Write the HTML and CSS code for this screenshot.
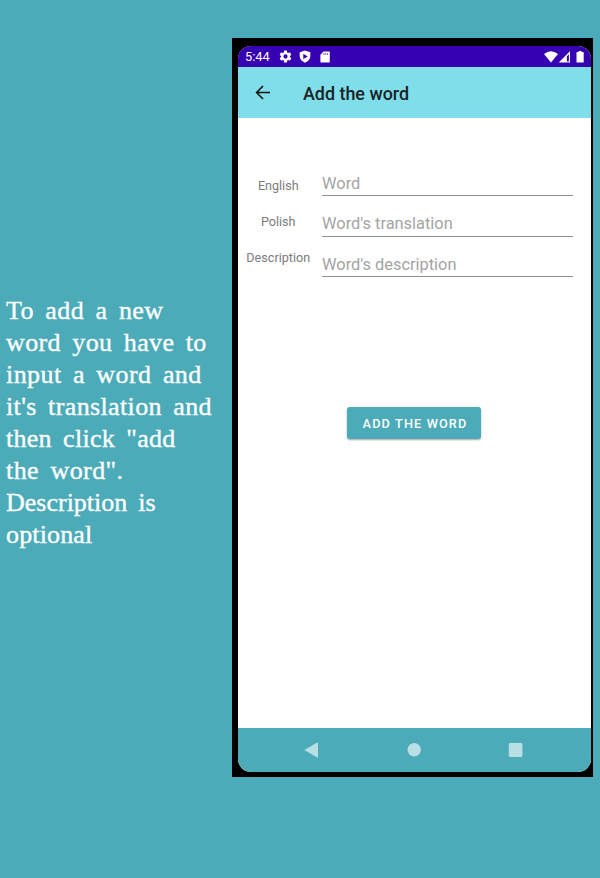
FILE: index.html
```html
<!DOCTYPE html>
<html lang="en">
<head>
<meta charset="utf-8">
<title>Add the word</title>
<link rel="stylesheet" href="styles.css">
</head>
<body>
<main class="page">
  <p class="intro">
    <span class="l1">To add a new</span>
    <span class="l2">word you have to</span>
    <span class="l3">input a word and</span>
    <span class="l4">it's translation and</span>
    <span class="l5">then click "add</span>
    <span class="l6">the word".</span>
    <span class="l7">Description is</span>
    <span class="l8">optional</span>
  </p>
  <section class="phone">
    <div class="screen">
      <div class="status">
        <span class="time">5:44</span>
        <svg class="gear" width="13" height="13" viewBox="1 1 22 22"><path fill="#fff" fill-rule="evenodd" d="M19.4 13a7.500 7.500 0 0 0 0-2l2.100-1.650a.5.5 0 0 0 .12-.64l-2-3.460a.5.5 0 0 0-.61-.22l-2.490 1a7.300 7.300 0 0 0-1.690-.98L14.450 2.400A.5.5 0 0 0 14 2h-4a.5.5 0 0 0-.5.400L9.120 5.050c-.61.25-1.170.59-1.690.98l-2.490-1a.5.5 0 0 0-.61.220l-2 3.460a.5.5 0 0 0 .12.640L4.560 11a7.900 7.900 0 0 0 0 2l-2.110 1.650a.5.5 0 0 0-.12.640l2 3.460c.12.220.39.300.61.220l2.490-1c.52.400 1.080.73 1.690.98l.38 2.650c.03.240.24.400.5.400h4c.25 0 .46-.18.500-.400l.38-2.650c.61-.25 1.170-.59 1.690-.98l2.490 1c.23.090.49 0 .61-.22l2-3.460a.5.5 0 0 0-.12-.640zM12 8.400a3.600 3.600 0 1 1 0 7.200 3.600 3.600 0 0 1 0-7.200z"/></svg>
        <svg class="shield" width="12" height="13" viewBox="0 0 12 13"><path fill="#fff" fill-rule="evenodd" d="M6 .5 11.300 2.300V6.500Q10.800 10.800 6 12.700 1.200 10.800.7 6.500V2.300zM4.300 3.700v5.400L8.800 6.400z"/></svg>
        <svg class="card" width="10" height="12" viewBox="0 0 10 12"><path fill="#fff" fill-rule="evenodd" d="M3.500.5H9a.8.8 0 0 1 .8.800v9.400a.8.8 0 0 1-.8.800H1.200a.8.8 0 0 1-.8-.8V3.700zM3.500 2.200v1.600h.8V2.200zM5.300 2.200v1.600h.8V2.200zM7.200 2.200v1.600h.8V2.200z"/></svg>
        <svg class="signals" width="42" height="14" viewBox="0 0 42 14"><g fill="#fff"><path d="M0 4Q7-1.300 14 4L7 12.600z"/><path fill-rule="evenodd" d="M14.700 12.600 26 1.300v11.300zM22.900 6.200v5.300h2V4.200z"/><path d="M33.100 2h1.500V.9h3V2h1.500q.6 0 .6.600V12q0 .600-.6.600h-6q-.6 0-.6-.6V2.600q0-.6.6-.6z"/></g></svg>
      </div>
      <header class="appbar">
        <svg width="16" height="16" viewBox="0 0 16 16" fill="none" stroke="#111" stroke-width="1.600"><path d="M15 8.500H2M8 2 1.600 8.500 8 15"/></svg>
        <h1>Add the word</h1>
      </header>
      <div class="content">
        <div class="form">
          <div class="labels"><span>English</span><span>Polish</span><span>Description</span></div>
          <div class="fields">
            <div class="field">Word</div>
            <div class="field">Word's translation</div>
            <div class="field">Word's description</div>
          </div>
        </div>
        <button class="submit">ADD THE WORD</button>
      </div>
      <nav class="nav">
        <svg width="353" height="44" viewBox="0 0 353 44" fill="#b8dfe4"><path d="M66.300 22 78.800 14.700q1.200-.5 1.200.600v13.400q0 1.100-1.200.600z"/><circle cx="176.200" cy="21.800" r="6.700"/><rect x="270.800" y="15" width="13.600" height="14" rx="1.300"/></svg>
      </nav>
    </div>
  </section>
</main>
</body>
</html>
```
FILE: styles.css
```css
body {
  margin: 0;
  background: #4babb8;
}
.page {
  box-sizing: border-box;
  display: flex;
  align-items: flex-start;
  height: 878px;
  padding-top: 38px;
}
.intro {
  box-sizing: border-box;
  flex: 0 0 232px;
  margin: 0;
  padding: 257px 0 0 6px;
  color: #fff;
  font: 26px/32px "Liberation Serif", serif;
  word-spacing: 4.500px;
  white-space: nowrap;
  -webkit-text-stroke: 0.350px #fff;
}
.intro span {
  display: block;
}
.l1, .l3, .l6 {
  letter-spacing: 0.420px;
}
.l2, .l4 {
  letter-spacing: 0.370px;
}
.l5 {
  letter-spacing: 0.270px;
}
.l8 {
  letter-spacing: 0.150px;
}
.phone {
  box-sizing: border-box;
  width: 361px;
  height: 739px;
  padding: 8px 2px 5px 6px;
  background: #000;
  font-family: Roboto, sans-serif;
}
.screen {
  display: flex;
  flex-direction: column;
  height: 726px;
  border-radius: 13px;
  overflow: hidden;
  background: #fff;
}
.status {
  box-sizing: border-box;
  display: flex;
  align-items: center;
  height: 21px;
  padding: 0 5px 0 7px;
  background: #3700b3;
}
.time {
  width: 34px;
  color: #fff;
  font-size: 12.800px;
  line-height: 22px;
}
.shield {
  margin-left: 7px;
}
.card {
  margin-left: 9px;
}
.signals {
  margin-left: auto;
}
.appbar {
  box-sizing: border-box;
  display: flex;
  align-items: center;
  height: 50.500px;
  padding-left: 17px;
  background: #80deea;
}
.appbar h1 {
  margin: 3px 0 0 32px;
  color: #182325;
  font-size: 17.900px;
  font-weight: 500;
  line-height: 24px;
}
.content {
  flex: 1;
  display: flex;
  flex-direction: column;
}
.form {
  display: flex;
  padding-top: 50px;
}
.labels {
  width: 80.500px;
  margin-right: 3.500px;
  text-align: center;
}
.labels span {
  display: block;
  height: 36px;
  color: #7c7c7c;
  font-size: 12.600px;
  line-height: 36px;
}
.field {
  box-sizing: border-box;
  width: 251px;
  height: 40.500px;
  padding-top: 18px;
  border-bottom: 1px solid #8d8d8d;
  color: #a4a4a4;
  font-size: 16.400px;
  line-height: 20px;
}
.fields {
  margin-top: -12px;
}
.submit {
  width: 134px;
  height: 32px;
  margin: 130px 0 0 109px;
  padding: 1px 0 0 2px;
  border: 0;
  border-radius: 3px;
  background: #4babb8;
  box-shadow: 0 1px 2px rgba(0, 0, 0, 0.35);
  color: #fff;
  font: 500 12.700px/31px Roboto, sans-serif;
  letter-spacing: 1.150px;
}
.nav {
  height: 44px;
  background: #4babb8;
}
.nav svg {
  display: block;
}
```
